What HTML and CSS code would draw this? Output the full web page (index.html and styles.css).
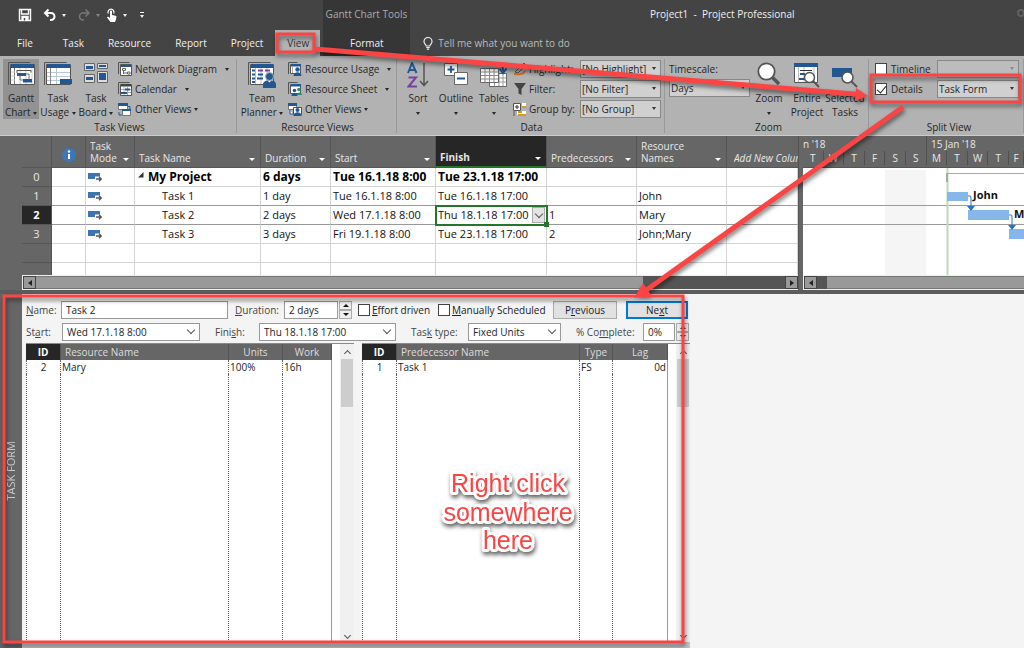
FILE: index.html
```html
<!DOCTYPE html>
<html lang="en">
<head>
    <meta charset="UTF-8">
    <meta name="viewport" content="width=device-width, initial-scale=1.0">
    <title>Project1 - Project Professional</title>
    <link rel="stylesheet" href="styles.css">
</head>
<body>
    <!-- Title bar -->
    <header class="titlebar">
        <div class="quick-access">
            <button class="qa-button" aria-label="Save"><svg width="14" height="14" viewBox="0 0 14 14" fill="none" stroke="#fff" stroke-width="1.4"><path d="M1.5 1.5h11v11h-11z"/><path d="M3.5 1.5v4.500h7v-4.500"/><path d="M4 12.500v-4h6v4" fill="#fff"/><path d="M6.500 10v2.500" stroke="#444"/></svg></button>
            <button class="qa-button" aria-label="Undo"><svg width="14" height="14" viewBox="0 0 14 14" fill="none" stroke="#fff" stroke-width="2"><path d="M5.500 1.500L2 5l3.500 3.500M2 5h6a3.500 3.500 0 0 1 0 7H7"/></svg><span class="caret"></span></button>
            <button class="qa-button faded" aria-label="Redo"><svg width="14" height="14" viewBox="0 0 14 14" fill="none" stroke="#777" stroke-width="1.500"><path d="M8.500 1.500L12 5L8.500 8.500M12 5H6a3.500 3.500 0 0 0 0 7h1"/></svg><span class="caret"></span></button>
            <button class="qa-button touch" aria-label="Touch mode"><svg width="13" height="14" viewBox="0 0 13 14"><path d="M5 3.500c0-1.400 2-1.400 2 0V7l3.500.8c1 .2 1 .8.9 1.600L10.800 12l-.8 2H5.500L2 9.500c.6-1 1.500-.8 3 .5z" fill="#fff"/><path d="M3.300 5.500a3 3 0 1 1 5.400 0" fill="none" stroke="#fff" stroke-width="1.200"/></svg><span class="caret"></span></button>
            <button class="qa-button customize" aria-label="Customize Quick Access Toolbar"><span class="caret"></span></button>
        </div>
        <div class="context-title">Gantt Chart Tools</div>
        <h1 class="window-title">Project1 &nbsp;-&nbsp; Project Professional</h1>
        <svg class="backdrop" width="8" height="30" viewBox="0 0 8 30" fill="none" stroke="#606060" stroke-width="2"><circle cx="5" cy="13" r="3"/></svg>
    </header>

    <!-- Ribbon tabs -->
    <nav class="tabs">
        <button class="tab file">File</button>
        <button class="tab">Task</button>
        <button class="tab">Resource</button>
        <button class="tab">Report</button>
        <button class="tab">Project</button>
        <button class="tab active">View</button>
        <button class="tab context">Format</button>
        <button class="tell-me"><svg width="10" height="13" viewBox="0 0 10 13" fill="none" stroke="#eee" stroke-width="1.200"><path d="M3.200 9C3 7.500 1 6.800 1 4.500a4 4 0 0 1 8 0C9 6.800 7 7.500 6.800 9zM3.300 10.500h3.400M3.800 12.200h2.400"/></svg>Tell me what you want to do</button>
    </nav>

    <!-- Ribbon -->
    <section class="ribbon">
        <div class="group task-views">
            <div class="group-body">
                <button class="big pressed">
                    <svg width="27" height="24" viewBox="0 0 27 24"><path d="M.5 23V.5h22" fill="none" stroke="#555"/><path d="M2.500 2.500h24v20h-24z" fill="#fff" stroke="#555"/><path d="M3 2h23v4H3z" fill="#225793"/><path d="M6.500 6v16" stroke="#777"/><path d="M3 10h4M3 14h4M3 18h4M12 6v16M18 6v16M24 6v16" stroke="#ccc"/><path d="M9 8.500h14v2M9 8v3" fill="none" stroke="#555" stroke-width="1"/><path d="M9 11h9v3H9zM15 17h9v3.500h-9z" fill="#225793"/><path d="M12 14v4h3M18 12h3v5" fill="none" stroke="#777"/></svg>
                    <span>Gantt<br>Chart <i class="caret"></i></span>
                </button>
                <button class="big">
                    <svg width="28" height="24" viewBox="0 0 28 24"><path d="M.5 23V.5h22" fill="none" stroke="#555"/><path d="M2.500 2.500h24v20h-24z" fill="#fff" stroke="#555"/><path d="M3 2h23v4H3z" fill="#225793"/><path d="M3 10.500h23M3 14.500h23M3 18.500h23M12.500 6v16" stroke="#b9c7d8"/><path d="M6.500 6v16" stroke="#888"/><path d="M16 17h12v5H16z" fill="#225793"/></svg>
                    <span>Task<br>Usage <i class="caret"></i></span>
                </button>
                <button class="big">
                    <svg width="25" height="22" viewBox="0 0 25 22"><g fill="#ddd" stroke="#666"><path d="M.5 1.500h10v7H.5zM13.500 1.500h10v5h-10zM.5 12.500h10v8H.5zM13.500 9.500h10v11h-10z"/></g><path d="M2 4h7v3H2zM15 3h7v2h-7zM2 15h7v3H2zM15 11h7v7h-7z" fill="#225793"/></svg>
                    <span>Task<br>Board <i class="caret"></i></span>
                </button>
                <div class="small-list">
                    <button class="small"><svg width="14" height="14" viewBox="0 0 14 14"><path d="M.5 12V.5h11" fill="none" stroke="#555"/><path d="M2.500 2.500h11v11h-11z" fill="#fff" stroke="#555"/><path d="M3 3h10v2H3z" fill="#225793"/><path d="M4.500 6.500h3v2h-3zM9.500 10h2.500v2H9.500zM5.500 8.500v3.500M5.500 11h4" fill="none" stroke="#666"/></svg>Network Diagram<i class="caret wide"></i></button>
                    <button class="small"><svg width="14" height="14" viewBox="0 0 14 14"><path d="M.5 12V.5h11" fill="none" stroke="#555"/><path d="M2.500 2.500h11v11h-11z" fill="#fff" stroke="#555"/><path d="M3 2h10v2.500H3z" fill="#444"/><path d="M6 5v8M9.500 5v8M3 7.500h10M3 10.500h10" stroke="#aaa"/><path d="M7 6.500h5v2H7zM3 10h6v2H3z" fill="#225793"/></svg>Calendar<i class="caret wide"></i></button>
                    <button class="small"><svg width="14" height="14" viewBox="0 0 14 14"><path d="M.5 1.500h9v6h-9zM4.500 7.500h8v6h-8z" fill="#fff" stroke="#777"/><path d="M0 1h10v3H0zM4 7h9v2H4z" fill="#225793"/><path d="M1 10v3h3M10 4.500h2V7" fill="none" stroke="#225793"/></svg>Other Views<i class="caret"></i></button>
                </div>
            </div>
            <h2 class="group-name">Task Views</h2>
        </div>
        <div class="group resource-views">
            <div class="group-body">
                <button class="big planner">
                    <svg width="28" height="26" viewBox="0 0 28 26"><path d="M.5 23V.5h22" fill="none" stroke="#555"/><path d="M2.500 2.500h23v20h-23z" fill="#fff" stroke="#555"/><path d="M3 2h22v4H3z" fill="#225793"/><path d="M7.500 6v16M13 6v16M19 6v16" stroke="#bbb"/><path d="M4 8.500h3M4 12.500h3M4 16.500h3M4 20h3M10 12.500h5M9 16.500h6" stroke="#225793" stroke-width="2"/><path d="M10 8.500h5M17 8.500h5" stroke="#7b3fa0" stroke-width="2"/><circle cx="21.500" cy="14.500" r="4" fill="#225793" stroke="#b2b2b2"/><path d="M15 26v-3.500c0-3 3-4 4.500-4l2 2 2-2c2 0 4.500 1 4.500 4V26z" fill="#225793"/></svg>
                    <span>Team<br>Planner <i class="caret"></i></span>
                </button>
                <div class="small-list">
                    <button class="small"><svg width="14" height="14" viewBox="0 0 14 14"><path d="M.5 12V.5h9" fill="none" stroke="#555"/><path d="M2.500 2.500h10v9h-10z" fill="#fff" stroke="#555"/><path d="M3 2h10v2.500H3z" fill="#225793"/><path d="M4.500 5v6" stroke="#aaa"/><circle cx="9.500" cy="7.500" r="2.200" fill="#225793"/><path d="M5.500 14c0-5 8-5 8 0z" fill="#225793"/></svg>Resource Usage<i class="caret wide"></i></button>
                    <button class="small"><svg width="14" height="14" viewBox="0 0 14 14"><path d="M.5 12V.5h9" fill="none" stroke="#555"/><path d="M2.500 2.500h10v9h-10z" fill="#fff" stroke="#555"/><path d="M3 2h10v2.500H3z" fill="#225793"/><circle cx="6.500" cy="8.500" r="1.800" fill="#225793"/><path d="M3.500 14c0-4 6-4 6 0z" fill="#225793"/><circle cx="11" cy="7.500" r="1.800" fill="#2f8e68"/><path d="M9 13c0-3.500 5-3.500 5 0z" fill="#2f8e68"/></svg>Resource Sheet<i class="caret wide"></i></button>
                    <button class="small"><svg width="14" height="14" viewBox="0 0 14 14"><path d="M.5 1.500h8v6h-8z" fill="#fff" stroke="#777"/><path d="M0 1h9v3H0z" fill="#225793"/><path d="M5.500 5.500h8v7h-8zM2 8v4h3" fill="#fff" stroke="#225793"/><circle cx="9.500" cy="8" r="2" fill="#225793"/><path d="M5.500 14c0-5 8-5 8 0z" fill="#225793"/></svg>Other Views<i class="caret"></i></button>
                </div>
            </div>
            <h2 class="group-name">Resource Views</h2>
        </div>
        <div class="group data">
            <div class="group-body">
                <button class="big">
                    <svg width="22" height="26" viewBox="0 0 22 26" fill="none" stroke-width="2"><path d="M1 11L5 1l4.500 10M2.500 8h5.500" stroke="#225793"/><path d="M1.500 15.500H9L1.500 24.500H10" stroke="#7b3fa0"/><path d="M17 1v22M13 19l4 4.500 4-4.500" stroke="#555" stroke-width="1.500"/></svg>
                    <span>Sort<br><i class="caret"></i></span>
                </button>
                <button class="big">
                    <svg width="24" height="24" viewBox="0 0 24 24"><path d="M.5 1.500h13v12H.5z" fill="#fff" stroke="#666"/><path d="M10.500 10.500h13v12h-13z" fill="#fff" stroke="#666"/><path d="M7 4v7M3.500 7.500h7M13 16.500h8" stroke="#225793" stroke-width="1.800"/></svg>
                    <span>Outline<br><i class="caret"></i></span>
                </button>
                <button class="big">
                    <svg width="28" height="26" viewBox="0 0 28 26"><path d="M9.500 11.500h17v13h-17z" fill="#fff" stroke="#666"/><path d="M14.500 12v12M19 12v12M23 12v12M10 16h16M10 20h16" stroke="#999"/><path d="M.5 6.500h18v14H.5z" fill="#fff" stroke="#666"/><path d="M5 7v13M9.500 7v13M14 7v13M1 10h17M1 13.500h17M1 17h17" stroke="#888"/><path d="M15 2c5-2 8 1 8 7M19.500 6.500L23 11l3.500-4.500" fill="none" stroke="#225793" stroke-width="2"/></svg>
                    <span>Tables<br><i class="caret"></i></span>
                </button>
                <div class="filters">
                    <label for="highlight"><svg width="14" height="14" viewBox="0 0 14 14" fill="none"><path d="M2 10L11 1l2 2-8 8z" stroke="#555"/><path d="M1 12c3 0 9 2 11-3" stroke="#d56b1b" stroke-width="2"/></svg>Highlight:</label>
                    <span class="select"><select id="highlight"><option>[No Highlight]</option></select></span>
                    <label for="filter"><svg width="14" height="14" viewBox="0 0 14 14"><path d="M1 1h12L8.500 7v6l-3-1.500V7z" fill="#444"/></svg>Filter:</label>
                    <span class="select"><select id="filter"><option>[No Filter]</option></select></span>
                    <label for="groupBy"><svg width="14" height="14" viewBox="0 0 14 14"><path d="M9 1h4v3H9zM4 9h9v4H4z" fill="#fff"/><path d="M9 5h4M5 10h4M5 13h8" stroke="#d99a28" stroke-width="2"/><path d="M1 9v5" stroke="#555"/><path d="M.5 1.500h7v7h-7z" fill="#fff" stroke="#555"/><path d="M4 3v4M2 5h4" stroke="#333"/></svg>Group by:</label>
                    <span class="select"><select id="groupBy"><option>[No Group]</option></select></span>
                </div>
            </div>
            <h2 class="group-name">Data</h2>
        </div>
        <div class="group zoom">
            <div class="group-body">
                <div class="timescale">
                    <label for="timescale">Timescale:</label>
                    <span class="select"><select id="timescale"><option>Days</option></select></span>
                </div>
                <button class="big">
                    <svg width="24" height="26" viewBox="0 0 24 26"><path d="M15 15l7 7" stroke="#555" stroke-width="3.500"/><circle cx="9.500" cy="9.500" r="8.200" fill="#fff" stroke="#555" stroke-width="1.800"/></svg>
                    <span>Zoom<br><i class="caret"></i></span>
                </button>
                <button class="big">
                    <svg width="26" height="26" viewBox="0 0 26 26"><path d="M.5 1.500h23v19H.5z" fill="#fff" stroke="#555"/><path d="M0 1h24v4H0z" fill="#225793"/><path d="M4.500 5v15M10 5v15M20 5v15" stroke="#bbb"/><path d="M6 8.500h12" stroke="#333"/><path d="M6 11h5v2H6zM5 16h6v2H5z" fill="#225793"/><path d="M19 19l6 6" stroke="#555" stroke-width="2"/><circle cx="15.500" cy="15.500" r="5" fill="#fff" stroke="#555" stroke-width="1.500"/></svg>
                    <span>Entire<br>Project</span>
                </button>
                <button class="big">
                    <svg width="26" height="26" viewBox="0 0 26 26"><path d="M0 6h20v9H0z" fill="#225793"/><path d="M19 19l6 6" stroke="#555" stroke-width="2"/><circle cx="15.500" cy="15.500" r="5.500" fill="#fff" stroke="#555" stroke-width="1.500"/></svg>
                    <span>Selected<br>Tasks</span>
                </button>
            </div>
            <h2 class="group-name">Zoom</h2>
        </div>
        <div class="group split-view">
            <div class="group-body">
                <div class="split-options">
                    <label><input type="checkbox" class="check">Timeline</label>
                    <span class="select disabled"><select aria-label="Timeline view" disabled><option></option></select></span>
                    <label><input type="checkbox" class="check" checked>Details</label>
                    <span class="select"><select aria-label="Details view"><option>Task Form</option></select></span>
                </div>
            </div>
            <h2 class="group-name">Split View</h2>
        </div>
    </section>

    <!-- Task sheet and Gantt chart -->
    <main class="views">
        <section class="sheet">
            <div class="sheet-table">
                <table class="tasks">
                    <colgroup>
                        <col class="c-num"><col class="c-info"><col class="c-mode"><col class="c-name"><col class="c-duration"><col class="c-start"><col class="c-finish"><col class="c-pred"><col class="c-res"><col>
                    </colgroup>
                    <thead>
                        <tr>
                            <th></th>
                            <th class="info"><svg width="14" height="14" viewBox="0 0 14 14"><circle cx="7" cy="7" r="7" fill="#3c78b8"/><circle cx="7" cy="3.500" r="1.200" fill="#fff"/><path d="M7 6v5" stroke="#fff" stroke-width="2"/></svg></th>
                            <th><div>Task<br>Mode<i class="caret"></i></div></th>
                            <th><div>Task Name<i class="caret"></i></div></th>
                            <th><div>Duration<i class="caret"></i></div></th>
                            <th><div>Start<i class="caret"></i></div></th>
                            <th class="current"><div>Finish<i class="caret"></i></div></th>
                            <th><div>Predecessors<i class="caret"></i></div></th>
                            <th><div>Resource<br>Names<i class="caret"></i></div></th>
                            <th class="add-column"><div>Add New Column</div></th>
                        </tr>
                    </thead>
                    <tbody>
                        <tr class="summary">
                            <th>0</th><td></td>
                            <td class="mode"><svg width="15" height="10" viewBox="0 0 15 10"><path d="M0 1h12v6H0z" fill="#3c75b0"/><path d="M7 4.500h8V10H7z" fill="#fff"/><path d="M8 7h5M11 4.800L13.300 7 11 9.200" fill="none" stroke="#555" stroke-width="1.300"/></svg></td>
                            <td class="project-name"><svg width="6" height="6" viewBox="0 0 6 6"><path d="M5.500 0v5.500H0z" fill="#333"/></svg>My Project</td><td>6 days</td><td>Tue 16.1.18 8:00</td><td>Tue 23.1.18 17:00</td><td></td><td></td><td></td>
                        </tr>
                        <tr>
                            <th>1</th><td></td>
                            <td class="mode"><svg width="15" height="10" viewBox="0 0 15 10"><path d="M0 1h12v6H0z" fill="#3c75b0"/><path d="M7 4.500h8V10H7z" fill="#fff"/><path d="M8 7h5M11 4.800L13.300 7 11 9.200" fill="none" stroke="#555" stroke-width="1.300"/></svg></td>
                            <td class="name">Task 1</td><td>1 day</td><td>Tue 16.1.18 8:00</td><td>Tue 16.1.18 17:00</td><td></td><td>John</td><td></td>
                        </tr>
                        <tr class="selected">
                            <th>2</th><td></td>
                            <td class="mode"><svg width="15" height="10" viewBox="0 0 15 10"><path d="M0 1h12v6H0z" fill="#3c75b0"/><path d="M7 4.500h8V10H7z" fill="#fff"/><path d="M8 7h5M11 4.800L13.300 7 11 9.200" fill="none" stroke="#555" stroke-width="1.300"/></svg></td>
                            <td class="name">Task 2</td><td>2 days</td><td>Wed 17.1.18 8:00</td><td class="cell-active">Thu 18.1.18 17:00<button class="cell-drop" aria-label="Pick a date"><i class="chevron"></i></button></td><td>1</td><td>Mary</td><td></td>
                        </tr>
                        <tr>
                            <th>3</th><td></td>
                            <td class="mode"><svg width="15" height="10" viewBox="0 0 15 10"><path d="M0 1h12v6H0z" fill="#3c75b0"/><path d="M7 4.500h8V10H7z" fill="#fff"/><path d="M8 7h5M11 4.800L13.300 7 11 9.200" fill="none" stroke="#555" stroke-width="1.300"/></svg></td>
                            <td class="name">Task 3</td><td>3 days</td><td>Fri 19.1.18 8:00</td><td>Tue 23.1.18 17:00</td><td>2</td><td>John;Mary</td><td></td>
                        </tr>
                        <tr><th></th><td></td><td></td><td></td><td></td><td></td><td></td><td></td><td></td><td></td></tr>
                        <tr><th></th><td></td><td></td><td></td><td></td><td></td><td></td><td></td><td></td><td></td></tr>
                    </tbody>
                </table>
            </div>
            <div class="hscroll">
                <button class="scroll-button left" aria-label="Scroll sheet left"></button>
                <div class="track"><div class="thumb sheet-thumb"></div></div>
                <button class="scroll-button right" aria-label="Scroll sheet right"></button>
            </div>
        </section>
        <section class="gantt">
            <div class="gantt-head">
                <div class="weeks"><span class="week first">n '18</span><span class="week">15 Jan '18</span></div>
                <div class="days"><span>T</span><span>W</span><span>T</span><span>F</span><span>S</span><span>S</span><span>M</span><span>T</span><span>W</span><span>T</span><span>F</span></div>
            </div>
            <svg class="gantt-chart" viewBox="0 0 221 107" preserveAspectRatio="xMinYMin slice">
                <path d="M82 2h41v105H82z" fill="#f5f5f5"/>
                <path d="M0 37.500h221M0 56.500h221" stroke="#9a9a9a"/>
                <path d="M144.500 0v107" stroke="#b8dbb8" stroke-width="2"/>
                <path d="M145 5.500h76" stroke="#aaa"/>
                <path d="M143 5h2v9h-2z" fill="#a3aba3"/>
                <path d="M144 24h21v9h-21zM165 42h41v10h-41zM206 61h15v10h-15z" fill="#87b7ea"/>
                <path d="M165 28h2q1 0 1 2v9M206 47h2q1 0 1 2v9" fill="none" stroke="#2574c4"/>
                <path d="M164 38h8l-4 5zM205 57h8l-4 5z" fill="#2574c4"/>
                <text x="170" y="31">John</text>
                <text x="211" y="50">Mary</text>
            </svg>
            <div class="hscroll">
                <button class="scroll-button left" aria-label="Scroll chart left"></button>
                <div class="track"><div class="thumb chart-thumb"></div></div>
            </div>
        </section>
    </main>

    <!-- Task form -->
    <section class="details">
        <div class="view-name"><span>TASK FORM</span></div>
        <form class="task-form">
            <div class="row row-top">
                <label for="taskName"><u>N</u>ame:</label>
                <input type="text" id="taskName" value="Task 2">
                <label for="duration" class="spaced"><u>D</u>uration:</label>
                <span class="spin"><input type="text" id="duration" value="2 days"><span class="arrows"><button type="button" class="up" aria-label="Increase duration"></button><button type="button" class="down" aria-label="Decrease duration"></button></span></span>
                <label class="option"><input type="checkbox" class="check"><span><u>E</u>ffort driven</span></label>
                <label class="option"><input type="checkbox" class="check"><span><u>M</u>anually Scheduled</span></label>
                <button type="button" class="push">P<u>r</u>evious</button>
                <button type="button" class="push next">Ne<u>x</u>t</button>
            </div>
            <div class="row row-second">
                <label for="start">St<u>a</u>rt:</label>
                <span class="combo"><select id="start"><option>Wed 17.1.18 8:00</option></select><i class="chevron"></i></span>
                <label for="finish" class="indented">Fini<u>s</u>h:</label>
                <span class="combo"><select id="finish"><option>Thu 18.1.18 17:00</option></select><i class="chevron"></i></span>
                <label for="taskType" class="indented">Tas<u>k</u> type:</label>
                <span class="combo"><select id="taskType"><option>Fixed Units</option></select><i class="chevron"></i></span>
                <label for="complete" class="indented">% Co<u>m</u>plete:</label>
                <span class="spin"><input type="text" id="complete" value="0%"><span class="arrows"><button type="button" class="up" aria-label="Increase percent complete"></button><button type="button" class="down" aria-label="Decrease percent complete"></button></span></span>
            </div>
            <div class="panels">
                <div class="panel">
                    <table class="list">
                        <colgroup><col class="l-id"><col><col class="l-units"><col class="l-work"></colgroup>
                        <thead><tr><th class="id">ID</th><th class="wide">Resource Name</th><th>Units</th><th>Work</th></tr></thead>
                        <tbody>
                            <tr><td class="id">2</td><td>Mary</td><td>100%</td><td>16h</td></tr>
                            <tr class="rest"><td></td><td></td><td></td><td></td></tr>
                        </tbody>
                    </table>
                    <div class="vscroll"><i class="chevron up"></i><div class="vthumb"></div><i class="chevron"></i></div>
                </div>
                <div class="panel">
                    <table class="list">
                        <colgroup><col class="l-id"><col><col class="l-type"><col class="l-lag"></colgroup>
                        <thead><tr><th class="id">ID</th><th class="wide">Predecessor Name</th><th>Type</th><th>Lag</th></tr></thead>
                        <tbody>
                            <tr><td class="id">1</td><td>Task 1</td><td>FS</td><td class="lag">0d</td></tr>
                            <tr class="rest"><td></td><td></td><td></td><td></td></tr>
                        </tbody>
                    </table>
                    <div class="vscroll"><i class="chevron up"></i><div class="vthumb"></div><i class="chevron"></i></div>
                </div>
            </div>
        </form>
    </section>

    <!-- Callouts drawn over the window -->
    <svg class="callouts" viewBox="0 0 1024 648">
        <g class="marks">
            <path d="M277 34h37v18h-37zM871 75h149v27H871zM4 296h679v346H4z" fill="none" stroke="#fb4444" stroke-width="3"/>
            <path d="M315 49L860 94.500M903 107L645 291" stroke="#fb4444" stroke-width="5"/>
            <path d="M868 96l-12-8-1 13zM634 298l9-15 8 12z" fill="#fb4444"/>
        </g>
        <g class="note">
            <text x="508" y="492">Right click</text>
            <text x="508" y="521">somewhere</text>
            <text x="508" y="549">here</text>
        </g>
    </svg>
</body>
</html>
```
FILE: styles.css
```css
/* Global Styles */
* {
    box-sizing: border-box;
}

body {
    margin: 0;
    min-height: 100vh;
    position: relative;
    display: flex;
    flex-direction: column;
    overflow: hidden;
    background-color: #f4f4f4;
    color: #262626;
    font-family: "Open Sans", "Noto Sans", sans-serif;
    font-size: 10px;
    line-height: 14px;
}

button,
input,
select {
    margin: 0;
    padding: 0;
    border: none;
    border-radius: 0;
    background: none;
    color: inherit;
    font: inherit;
}

svg {
    display: block;
    flex: none;
}

.caret {
    display: inline-block;
    flex: none;
    border: 3px solid transparent;
    border-top-color: currentColor;
    border-bottom: none;
    vertical-align: middle;
}

.chevron {
    display: block;
    flex: none;
    width: 6px;
    height: 6px;
    border: solid #555;
    border-width: 0 1px 1px 0;
    transform: rotate(45deg);
}

.chevron.up {
    transform: rotate(225deg);
}

/* Title bar */
.titlebar {
    display: flex;
    height: 30px;
    background-color: #444;
    color: #f0f0f0;
}

.quick-access {
    display: flex;
    align-items: center;
    gap: 11px;
    width: 323px;
    padding-left: 18px;
}

.qa-button {
    display: flex;
    align-items: center;
    gap: 5px;
}

.qa-button.faded {
    color: #888;
}

.qa-button.touch {
    margin-left: -6px;
}

.qa-button.customize {
    margin-left: 2px;
    padding-top: 2px;
    border-top: 1px solid #fff;
}

.qa-button .caret {
    border-width: 2px;
    border-top-width: 3px;
    border-bottom: none;
}

.context-title {
    width: 87px;
    line-height: 28px;
    text-align: center;
    background-color: #363636;
    color: #aaa;
}

.window-title {
    flex: 1;
    margin: 0;
    padding-left: 240px;
    font-size: 10px;
    font-weight: normal;
    line-height: 28px;
}

/* Tabs */
.tabs {
    display: flex;
    height: 26px;
    background-color: #444;
    color: #f0f0f0;
}

.tab {
    padding: 0 12px;
}

.tab.file {
    padding: 0 18px 0 17px;
}

.tab.active {
    width: 45px;
    margin-right: 3px;
    background-color: #b2b2b2;
    color: #333;
}

.tab.context {
    width: 87px;
    background-color: #363636;
}

.tell-me {
    display: flex;
    align-items: center;
    gap: 5px;
    padding-left: 13px;
    color: #bbb;
}

/* Ribbon */
.ribbon {
    display: flex;
    height: 80px;
    background-color: #b2b2b2;
    border-bottom: 1px solid #ccc;
}

.group {
    display: flex;
    flex-direction: column;
    margin: 3px 0 2px;
    border-right: 1px solid #999;
}

.group-body {
    display: flex;
    height: 63px;
}

.group-name {
    margin: 0;
    font-size: 10px;
    font-weight: normal;
    line-height: 12px;
    text-align: center;
}

.task-views {
    width: 237px;
    padding-left: 3px;
}

.resource-views {
    width: 160px;
    padding-left: 2px;
}

.data {
    width: 268px;
    padding-left: 2px;
}

.zoom {
    width: 204px;
    padding-left: 4px;
}

.split-view {
    flex: 1;
    padding-left: 6px;
}

.big {
    display: flex;
    flex-direction: column;
    align-items: center;
    justify-content: space-between;
    width: 38px;
    height: 60px;
    padding-top: 3px;
    line-height: 14px;
    white-space: nowrap;
}

.big.planner {
    width: 46px;
}

.big.pressed {
    width: 36px;
    background-color: #929292;
}

.big .caret {
    border-width: 2px;
    border-top-width: 3px;
    border-bottom: none;
}

.small-list {
    display: flex;
    flex-direction: column;
    padding-left: 3px;
}

.small {
    display: flex;
    align-items: center;
    gap: 3px;
    height: 20px;
    white-space: nowrap;
}

.small .caret {
    border-width: 2px;
    border-top-width: 3px;
    border-bottom: none;
}

.small .caret.wide {
    margin-left: 5px;
}

.select {
    position: relative;
    display: block;
    height: 18px;
    border: 1px solid #888;
    background-color: #d0d0d0;
}

.select select {
    display: block;
    width: 100%;
    height: 16px;
    padding-left: 1px;
    appearance: none;
}

.select::after {
    content: "";
    position: absolute;
    top: 6px;
    right: 4px;
    border: 2px solid transparent;
    border-top: 3px solid #333;
    border-bottom: none;
}

.select.disabled {
    background-color: #bcbcbc;
}

.select.disabled::after {
    border-top-color: #888;
}

.filters {
    display: grid;
    grid-template-columns: 67px 81px;
    grid-auto-rows: 18px;
    gap: 2px 0;
    padding-top: 1px;
}

.filters label {
    display: flex;
    align-items: center;
    gap: 2px;
    white-space: nowrap;
}

.timescale {
    width: 81px;
}

.timescale label {
    display: block;
    padding: 3px 0;
}

.split-options {
    display: grid;
    grid-template-columns: 62px 82px;
    grid-auto-rows: 18px;
    gap: 2px 0;
    padding-top: 1px;
}

.split-options label {
    display: flex;
    align-items: center;
    gap: 4px;
}

.check {
    display: flex;
    justify-content: center;
    flex: none;
    width: 12px;
    height: 12px;
    border: 1px solid #444;
    background-color: #fff;
    appearance: none;
}

.check:checked::after {
    content: "";
    width: 4px;
    height: 8px;
    border: solid #222;
    border-width: 0 1px 1px 0;
    transform: rotate(40deg);
}

/* Sheet and chart */
.views {
    display: flex;
    height: 158px;
    background-color: #666;
    border-bottom: 4px solid #5c5c5c;
}

.sheet {
    display: flex;
    flex-direction: column;
    flex: 1;
    min-width: 0;
    padding-left: 22px;
    border-right: 1px solid #555;
}

.sheet-table {
    height: 139px;
    overflow: hidden;
}

.tasks {
    width: 100%;
    table-layout: fixed;
    border-collapse: separate;
    border-spacing: 0;
    font-size: 11px;
}

.c-num {
    width: 30px;
}

.c-info {
    width: 34px;
}

.c-mode {
    width: 49px;
}

.c-name {
    width: 126px;
}

.c-duration {
    width: 70px;
}

.c-start {
    width: 105px;
}

.c-finish {
    width: 111px;
}

.c-pred,
.c-res {
    width: 90px;
}

.tasks th {
    padding: 0;
    border-right: 1px solid #555;
    border-bottom: 1px solid #555;
    background-color: #666;
    color: #e8e8e8;
    font-weight: normal;
}

.tasks thead th {
    height: 32px;
    padding: 0 5px 3px 4px;
    font-size: 10px;
    line-height: 12px;
    text-align: left;
    vertical-align: bottom;
    white-space: nowrap;
}

.tasks thead th div {
    display: flex;
    align-items: flex-end;
    justify-content: space-between;
    overflow: hidden;
}

.tasks thead .caret {
    margin-bottom: 3px;
    color: #fff;
}

.tasks thead .info {
    padding: 0 10px 5px;
}

.tasks thead .current {
    border-bottom: 2px solid #23762a;
    background-color: #262626;
    font-weight: bold;
}

.tasks thead .add-column {
    padding: 0 0 3px 7px;
    border-right: none;
    font-style: italic;
}

.tasks td {
    height: 19px;
    padding: 0 0 0 2px;
    border-right: 1px solid #d4d4d4;
    border-bottom: 1px solid #d4d4d4;
    background-color: #fff;
    color: #111;
    line-height: 18px;
    white-space: nowrap;
}

.tasks .summary td {
    color: #000;
    font-size: 12px;
    font-weight: bold;
}

.tasks .name {
    padding-left: 27px;
}

.tasks .project-name svg {
    display: inline-block;
    margin: 0 4px 3px 1px;
}

.tasks .selected th {
    background-color: #262626;
    color: #fff;
    font-weight: bold;
}

.tasks .selected td,
.tasks tbody tr:nth-child(2) td {
    border-bottom-color: #999;
}

.tasks .selected .cell-active {
    position: relative;
    outline: 2px solid #23762a;
    outline-offset: -1px;
}

.cell-active::after {
    content: "";
    position: absolute;
    right: -3px;
    bottom: -3px;
    width: 5px;
    height: 5px;
    background-color: #23762a;
}

.cell-drop {
    position: absolute;
    top: 1px;
    right: 1px;
    width: 13px;
    height: 16px;
    padding: 0 3px 2px;
    border: 1px solid #aaa;
    background-color: #e3e3e3;
}

.hscroll {
    display: flex;
    height: 15px;
    border: 1px solid #eee;
    border-right: none;
    background-color: #555;
}

.scroll-button {
    display: flex;
    align-items: center;
    justify-content: center;
    width: 13px;
    border: 1px solid #444;
    background-color: #999;
}

.scroll-button::before {
    content: "";
    border: 3px solid transparent;
}

.scroll-button.left::before {
    border-right: 4px solid #222;
    border-left: none;
}

.scroll-button.right::before {
    border-left: 4px solid #222;
    border-right: none;
}

.track {
    flex: 1;
}

.thumb {
    height: 100%;
    border: solid #777;
    border-width: 1px 0;
    background-color: #999;
}

.sheet-thumb {
    width: 81%;
}

.chart-thumb {
    margin-left: 10px;
}

.gantt {
    display: flex;
    flex-direction: column;
    width: 225px;
    border-left: 4px solid #666;
}

.gantt-head {
    height: 32px;
    border-bottom: 1px solid #555;
    color: #e8e8e8;
}

.weeks {
    display: flex;
    height: 15px;
    line-height: 17px;
}

.week {
    padding-left: 4px;
}

.week.first {
    width: 124px;
    padding-left: 0;
    border-right: 1px solid #505050;
}

.days {
    display: grid;
    grid-template-columns: repeat(10, 1fr) 15px;
    line-height: 14px;
    text-align: center;
}

.days span {
    border-right: 1px solid #505050;
}

.gantt-chart {
    width: 100%;
    height: 107px;
    background-color: #fff;
}

.gantt-chart text {
    fill: #111;
    font-size: 11px;
    font-weight: bold;
}

/* Task form */
.details {
    display: flex;
    flex: 1;
}

.view-name {
    display: flex;
    align-items: center;
    justify-content: center;
    width: 22px;
    background-color: #666;
    color: #ccc;
    font-size: 11px;
}

.view-name span {
    writing-mode: vertical-rl;
    transform: rotate(180deg);
}

.task-form {
    display: flex;
    flex-direction: column;
    width: 668px;
    padding: 6px 0 0 4px;
    border-bottom: 6px solid #c4c4c4;
    color: #444;
}

.row {
    display: grid;
    align-items: center;
    height: 19px;
    margin-bottom: 3px;
    white-space: nowrap;
}

.row-top {
    grid-template-columns: 35px 167px 56px 74px 80px 115px 73px 62px;
}

.row-second {
    grid-template-columns: 36px 138px 59px 137px 72px 93px 82px 46px;
    margin-bottom: 2px;
}

.row input[type="text"],
.combo {
    width: 100%;
    height: 18px;
    border: 1px solid #999;
    background-color: #fff;
    color: #222;
}

.row input[type="text"] {
    min-width: 0;
    padding-left: 4px;
}

.spaced {
    padding-left: 7px;
}

.indented {
    padding-left: 15px;
}

.combo {
    display: flex;
    align-items: center;
}

.combo select {
    width: 100%;
    padding-left: 4px;
    appearance: none;
}

.combo .chevron {
    margin: 0 5px 3px 0;
}

.spin {
    display: flex;
    gap: 1px;
}

.row-top .spin {
    padding-right: 6px;
}

.arrows {
    display: flex;
    flex-direction: column;
    flex: none;
    width: 13px;
}

.arrows button {
    display: flex;
    align-items: center;
    justify-content: center;
    height: 9px;
    border: 1px solid #aaa;
    background-color: #eee;
}

.arrows button::before {
    content: "";
    border: 3px solid transparent;
}

.arrows .up::before {
    border-top: none;
    border-bottom-color: #111;
}

.arrows .down::before {
    border-bottom: none;
    border-top-color: #111;
}

.option {
    display: flex;
    align-items: center;
    gap: 2px;
    color: #222;
}

.push {
    width: 64px;
    height: 18px;
    border: 1px solid #aaa;
    background-color: #e1e1e1;
    color: #222;
}

.push.next {
    width: 62px;
    border: 2px solid #0078d7;
}

.panels {
    display: flex;
    flex: 1;
    justify-content: space-between;
}

.panel {
    display: flex;
    justify-content: space-between;
    width: 328px;
    border-top: 1px solid #888;
    background-color: #fff;
}

.list {
    width: 306px;
    height: 100%;
    table-layout: fixed;
    border-collapse: separate;
    border-spacing: 0;
    color: #222;
}

.l-id {
    width: 35px;
}

.l-units {
    width: 54px;
}

.l-work {
    width: 49px;
}

.l-type {
    width: 33px;
}

.l-lag {
    width: 55px;
}

.list th {
    height: 16px;
    padding: 0;
    border-right: 1px solid #555;
    background-color: #666;
    color: #ddd;
    font-weight: normal;
    line-height: 16px;
}

.list .wide {
    padding-left: 4px;
    text-align: left;
}

.list th.id {
    background-color: #262626;
    color: #fff;
    font-weight: bold;
}

.list td {
    height: 14px;
    padding: 0 1px;
    border-right: 1px dotted #666;
    line-height: 13px;
}

.list td:last-child {
    border-right: 1px solid #999;
}

.list td:first-child {
    border-left: 1px dotted #666;
}

.list td.id {
    text-align: center;
}

.list .rest td {
    height: auto;
}

.list .lag {
    text-align: right;
}

.vscroll {
    display: flex;
    flex-direction: column;
    align-items: center;
    justify-content: space-between;
    width: 14px;
    padding: 7px 0 4px;
    background-color: #f0f0f0;
}

.vscroll .chevron {
    width: 5px;
    height: 5px;
}

.vthumb {
    width: 12px;
    height: 48px;
    margin: 3px 0 auto;
    background-color: #cdcdcd;
}

/* Callouts */
.callouts {
    position: absolute;
    top: 0;
    left: 0;
    width: 100%;
    pointer-events: none;
}

.marks {
    filter: drop-shadow(1px 3px 2px rgba(0, 0, 0, 0.5));
}

.note {
    fill: #fb4444;
    stroke: #fff;
    stroke-width: 6px;
    stroke-linejoin: round;
    paint-order: stroke;
    font-family: "Liberation Sans", Arial, sans-serif;
    font-size: 25px;
    text-anchor: middle;
    filter: drop-shadow(1px 3px 2px rgba(0, 0, 0, 0.6));
}
```
